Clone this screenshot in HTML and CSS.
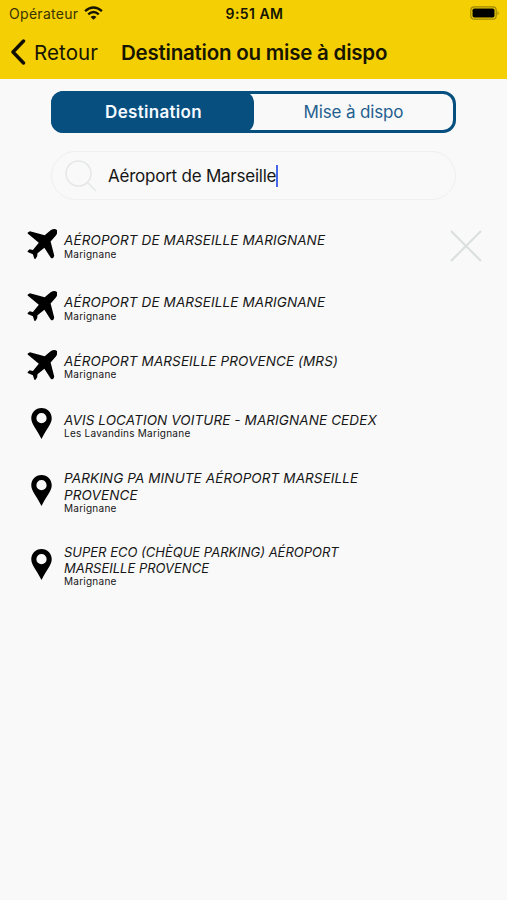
FILE: index.html
```html
<!DOCTYPE html>
<html lang="fr">
<head>
<meta charset="utf-8">
<title>Destination ou mise à dispo</title>
<link rel="stylesheet" href="styles.css">
</head>
<body>
<svg width="0" height="0" class="defs">
  <symbol id="plane" viewBox="0 0 93 93"><path d="M2 14 Q1 10 5 9 L9 7 L54 19 L72 4 Q84 -3 91 3 Q95 10 88 20 L72 38 L83 81 L81 87 L76 90 L72 87 L53 57 L32 74 L31 83 L25 92 L22 90 L18 77 L2 70 L2 67 L8 62 L18 64 L36 42 Z"/></symbol>
  <symbol id="pin" viewBox="0 0 62 94"><path fill-rule="evenodd" d="M31 0C13 0 0 14 0 31C0 49 16 63 31 94C46 63 62 49 62 31C62 14 49 0 31 0ZM31 15.500a15.500 15.500 0 1 1 0 31a15.500 15.500 0 1 1 0-31Z"/></symbol>
</svg>
<header class="top">
  <div class="status">
    <div class="carrier"><span class="carrier-name">Opérateur</span>
      <svg class="wifi" viewBox="0 0 18 13" fill="none" stroke="#171500" stroke-width="2.300"><path d="M1 4.700Q9-2.300 17 4.700M4 7.800Q9 3.500 14 7.800"/><path d="M6.200 10.200Q9 7.900 11.800 10.200L9 13Z" fill="#171500" stroke="none"/></svg>
    </div>
    <span class="time">9:51 AM</span>
    <svg class="battery" viewBox="0 0 30 14"><rect x=".8" y=".8" width="25.400" height="12.400" rx="3.500" fill="none" stroke="#9d8800" stroke-width="1.200"/><rect x="2.500" y="2.500" width="22" height="9" rx="1.800"/><path d="M27.500 4.700Q30 7 27.500 9.300Z" fill="#9d8800"/></svg>
  </div>
  <nav class="nav">
    <svg class="chevron" viewBox="0 0 16 26"><path d="M13.500 2L3 13L13.500 24" fill="none" stroke="#111000" stroke-width="3.400" stroke-linecap="round" stroke-linejoin="round"/></svg>
    <span class="back">Retour</span>
    <h1 class="title">Destination ou mise à dispo</h1>
  </nav>
</header>
<main>
  <div class="tabs"><div class="tab active">Destination</div><div class="tab">Mise à dispo</div></div>
  <div class="search">
    <svg class="lens" viewBox="0 0 32 32" fill="none" stroke="#e6e8e8" stroke-width="1.600"><circle cx="13.500" cy="13.500" r="12.500"/><path d="M22.500 22.500L31 31"/></svg>
    <span class="query">Aéroport de Marseille</span><span class="caret"></span>
  </div>
  <ul class="results">
    <li class="row first"><svg class="plane"><use href="#plane"/></svg><div class="info"><div class="name">AÉROPORT DE MARSEILLE MARIGNANE</div><div class="city">Marignane</div></div>
      <svg class="close" viewBox="0 0 32 32"><path d="M1 1L31 31M31 1L1 31" stroke="#dce0df" stroke-width="2.300"/></svg></li>
    <li class="row"><svg class="plane"><use href="#plane"/></svg><div class="info"><div class="name">AÉROPORT DE MARSEILLE MARIGNANE</div><div class="city">Marignane</div></div></li>
    <li class="row"><svg class="plane"><use href="#plane"/></svg><div class="info"><div class="name">AÉROPORT MARSEILLE PROVENCE (MRS)</div><div class="city">Marignane</div></div></li>
    <li class="row"><svg class="pin"><use href="#pin"/></svg><div class="info"><div class="name">AVIS LOCATION VOITURE - MARIGNANE CEDEX</div><div class="city">Les Lavandins Marignane</div></div></li>
    <li class="row tall"><svg class="pin"><use href="#pin"/></svg><div class="info"><div class="name">PARKING PA MINUTE AÉROPORT MARSEILLE<br>PROVENCE</div><div class="city">Marignane</div></div></li>
    <li class="row tall compact"><svg class="pin"><use href="#pin"/></svg><div class="info"><div class="name">SUPER ECO (CHÈQUE PARKING) AÉROPORT<br>MARSEILLE PROVENCE</div><div class="city">Marignane</div></div></li>
  </ul>
</main>
</body>
</html>
```
FILE: styles.css
```css
* { box-sizing: border-box; }
body { margin: 0; height: 900px; background: #f9f9f9; color: #161616; font-family: Inter, "Liberation Sans", sans-serif; white-space: nowrap; overflow: hidden; }
svg { display: block; flex: none; }
.defs { position: absolute; }
.top { height: 79px; background: #f3cf04; color: #171500; }
.status { height: 27px; display: grid; grid-template-columns: 1fr auto 1fr; align-items: center; padding: 0 7px 1px 9px; }
.carrier { display: flex; align-items: center; gap: 6px; font-size: 14px; letter-spacing: .3px; color: #3a3300; }
.wifi { width: 19px; height: 14px; margin-top: -1px; }
.time { font-size: 14px; font-weight: 600; letter-spacing: .45px; }
.battery { width: 30px; height: 14px; justify-self: end; }
.nav { height: 52px; display: flex; align-items: center; padding: 0 0 2px 10px; }
.chevron { width: 16px; height: 26px; }
.back { width: 87px; margin-left: 8px; font-size: 20.5px; letter-spacing: .1px; }
.title { margin: 0; font-size: 20.5px; font-weight: 600; letter-spacing: -.22px; }
.tabs { width: 405px; height: 42px; margin: 12px 0 0 51px; display: flex; border: 3px solid #064f7f; border-radius: 13px; }
.tab { flex: 1; display: flex; align-items: center; justify-content: center; font-size: 17px; letter-spacing: -.15px; color: #24608f; }
.active { flex: 0 0 203px; margin: -3px 0 -3px -3px; padding-left: 2px; background: #064f7f; border-radius: 12px; color: #f4faff; font-weight: 600; letter-spacing: .3px; }
.search { width: 405px; height: 49px; margin: 18px 0 0 51px; border: 1.5px solid #eeefef; border-radius: 25px; display: flex; align-items: center; padding-left: 13px; }
.lens { width: 32px; height: 32px; }
.query { margin-left: 11px; font-size: 17px; letter-spacing: -.23px; }
.caret { width: 2px; height: 22px; background: #4668e8; }
.results { list-style: none; margin: 25px 0 0; padding: 0; }
.row { height: 58.6px; padding-left: 26px; display: flex; align-items: flex-start; }
.first { height: 62px; }
.tall { height: 74px; }
.plane { width: 30.5px; height: 30.5px; margin: 4px 0 0 .5px; }
.pin { width: 21px; height: 31px; margin: 4px 5px 0 5px; }
.tall .pin { margin-top: 12px; }
.info { margin: 7.4px 0 0 7px; }
.name { font-size: 13.5px; font-style: italic; letter-spacing: .11px; line-height: 16px; }
.tall .name { line-height: 16.5px; }
.compact .info { margin-top: 8.6px; }
.compact .name { font-size: 13px; letter-spacing: 0; line-height: 15.5px; }
.city { font-size: 10px; line-height: 12px; letter-spacing: .25px; margin-top: -.9px; }
.compact .city { margin-top: -1.5px; }
.close { width: 32px; height: 32px; margin: 5px 25px 0 auto; }
```
